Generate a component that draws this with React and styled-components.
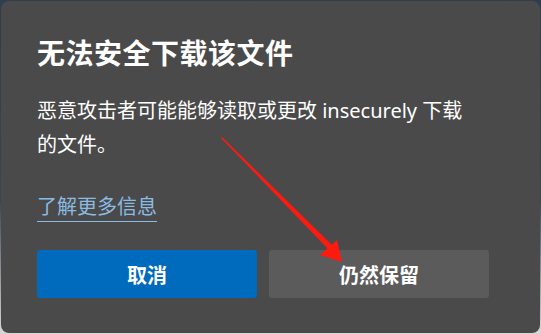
import styled, { createGlobalStyle } from 'styled-components';

const GlobalStyle = createGlobalStyle`
  html, body {
    margin: 0;
    padding: 0;
  }
  body {
    width: 541px;
    height: 334px;
    overflow: hidden;
    background: linear-gradient(180deg, #2f3d4e 0%, #3a4656 60%, #d8d8d8 100%);
    font-family: "Segoe UI", "Noto Sans", "Noto Sans CJK SC", sans-serif;
  }
`;

export default function App() {
  return (
    <>
      <GlobalStyle />
      <Dialog>
        <Title>无法安全下载该文件</Title>
        <Message>恶意攻击者可能能够读取或更改 insecurely 下载的文件。</Message>
        <LearnMore href="#">了解更多信息</LearnMore>
        <Actions>
          <Button $primary>取消</Button>
          <Button>仍然保留</Button>
        </Actions>
        <Arrow viewBox="0 0 541 334">
          <polygon points="222,137 335,248 331,252 221,138" fill="#ff1a10" />
          <polygon points="342,262 320,255 337,240" fill="#ff1a10" />
        </Arrow>
      </Dialog>
    </>
  );
}

const Dialog = styled.div`
  position: relative;
  box-sizing: border-box;
  width: 539px;
  height: 332px;
  margin: 1px 0 0 1px;
  padding: 32px 51px 0 36px;
  background: #4a4a4a;
  border-radius: 8px;
  display: flex;
  flex-direction: column;
  align-items: flex-start;
  color: #ffffff;
`;

const Title = styled.h1`
  margin: 0;
  font-size: 28px;
  line-height: 40px;
  font-weight: 700;
  letter-spacing: 0.5px;
`;

const Message = styled.p`
  max-width: 442px;
  margin: 21px 0 0;
  font-size: 20px;
  line-height: 34px;
  font-weight: 400;
`;

const LearnMore = styled.a`
  margin-top: 31px;
  font-size: 20px;
  line-height: 28px;
  color: #8bbbe3;
  text-decoration: none;
  border-bottom: 1px solid #8bbbe3;
`;

const Actions = styled.div`
  margin-top: 28px;
  display: flex;
  gap: 12px;
`;

const Button = styled.button`
  width: 220px;
  height: 48px;
  border: none;
  border-radius: 3px;
  background: ${(p) => (p.$primary ? '#006abc' : '#5b5b5b')};
  color: #ffffff;
  font-family: inherit;
  font-size: 20px;
  font-weight: 700;
`;

const Arrow = styled.svg`
  position: absolute;
  left: -1px;
  top: -1px;
  width: 541px;
  height: 334px;
  pointer-events: none;
`;
